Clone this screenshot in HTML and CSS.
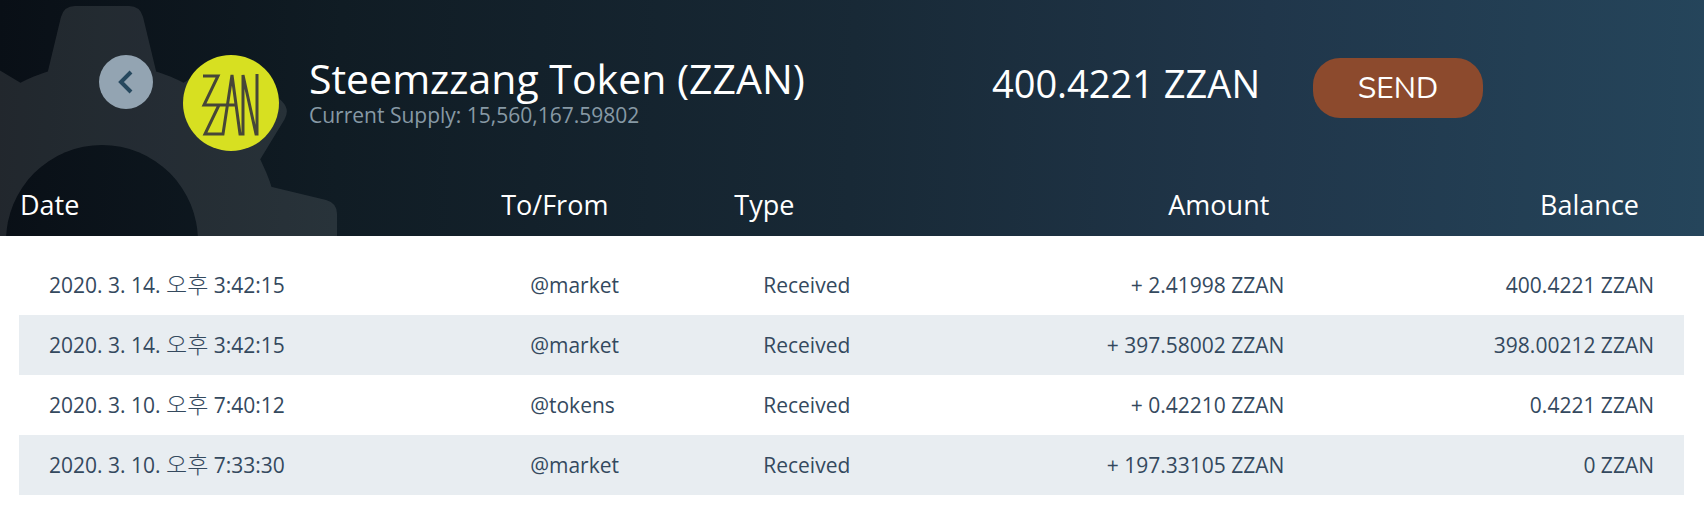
FILE: index.html
```html
<!DOCTYPE html>
<html lang="ko">
<head>
<meta charset="utf-8">
<title>Steemzzang Token (ZZAN)</title>
<link rel="stylesheet" href="styles.css">
</head>
<body>
<main class="wallet">
  <svg class="gear" viewBox="0 0 340 236" aria-hidden="true">
    <defs>
      <path id="tooth" d="M-54-170-41-224Q-38-235-27-235H27Q38-235 41-224L54-170 0 0Z"/>
      <path id="tooth-short" d="M-54-170-43-215Q-40-226-29-226H29Q40-226 43-215L54-170 0 0Z"/>
      <mask id="hub">
        <g transform="translate(102 241)">
          <circle r="178" fill="#fff"/>
          <use href="#tooth" fill="#fff"/>
          <use href="#tooth-short" fill="#fff" transform="rotate(45)"/>
          <use href="#tooth" fill="#fff" transform="rotate(90)"/>
          <use href="#tooth-short" fill="#fff" transform="rotate(-45)"/>
          <circle r="96" fill="#000"/>
        </g>
      </mask>
    </defs>
    <rect class="gear-fill" width="340" height="236" mask="url(#hub)"/>
  </svg>

  <header class="token">
    <button class="back" type="button" aria-label="Back">
      <svg class="back-icon" viewBox="0 0 54 54" aria-hidden="true"><path d="M32 17 22 27 32 37"/></svg>
    </button>
    <svg class="logo" viewBox="0 0 96 96" role="img" aria-label="ZZAN">
      <circle class="logo-disc" cx="48" cy="48" r="48"/>
      <path class="logo-mark" d="M20 21H35L21 50H54M36 50 22 79H40L49 20 57 79H60V20L73 79H74V19"/>
    </svg>
    <div class="title">
      <h1 class="name">Steemzzang Token (ZZAN)</h1>
      <p class="supply">Current Supply: 15,560,167.59802</p>
    </div>
    <p class="holding">400.4221 ZZAN</p>
    <button class="send" type="button">SEND</button>
  </header>

  <table class="history">
    <colgroup><col class="c-date"><col class="c-who"><col class="c-type"><col class="c-amount"><col class="c-balance"></colgroup>
    <thead>
      <tr><th>Date</th><th>To/From</th><th>Type</th><th class="num">Amount</th><th class="num">Balance</th></tr>
    </thead>
    <tbody>
      <tr><td>2020. 3. 14. <span class="meridiem">오후</span> 3:42:15</td><td>@market</td><td>Received</td><td class="num">+ 2.41998 ZZAN</td><td class="num">400.4221 ZZAN</td></tr>
      <tr><td>2020. 3. 14. <span class="meridiem">오후</span> 3:42:15</td><td>@market</td><td>Received</td><td class="num">+ 397.58002 ZZAN</td><td class="num">398.00212 ZZAN</td></tr>
      <tr><td>2020. 3. 10. <span class="meridiem">오후</span> 7:40:12</td><td>@tokens</td><td>Received</td><td class="num">+ 0.42210 ZZAN</td><td class="num">0.4221 ZZAN</td></tr>
      <tr><td>2020. 3. 10. <span class="meridiem">오후</span> 7:33:30</td><td>@market</td><td>Received</td><td class="num">+ 197.33105 ZZAN</td><td class="num">0 ZZAN</td></tr>
    </tbody>
  </table>
</main>
</body>
</html>
```
FILE: styles.css
```css
* { box-sizing: border-box; }

body {
  margin: 0;
  background: #fff;
  color: #34495e;
  font-family: "Open Sans", "Noto Sans CJK KR", sans-serif;
}

h1, p { margin: 0; font-weight: 400; }

.wallet {
  position: relative;
  padding: 0 20px 11px 19px;
  background: linear-gradient(92deg, #090f16 0%, #101c24 20%, #182936 50%, #20364a 74%, #25455b 100%) 0 0 / 100% 236px no-repeat;
}

.gear {
  position: absolute;
  top: 0;
  left: 0;
  width: 340px;
  height: 236px;
}

.gear-fill { fill: #fff; fill-opacity: .1; }

.token {
  position: relative;
  display: flex;
  align-items: flex-start;
  height: 175px;
  padding: 55px 201px 0 80px;
}

.back {
  width: 54px;
  height: 54px;
  padding: 0;
  border: 0;
  border-radius: 50%;
  background: #93a4b2;
}

.back-icon { display: block; fill: none; stroke: #26485e; stroke-width: 4; }

.logo { width: 96px; height: 96px; margin-left: 30px; }
.logo-disc { fill: #d7e021; }
.logo-mark { fill: none; stroke: #464638; stroke-width: 3; }

.title { margin-left: 30px; }
.name { font-size: 41px; line-height: 46px; white-space: nowrap; }
.name, .holding, .send, .history th { color: #fff; }
.supply { color: #8799a5; font-size: 21px; line-height: 28px; }

.holding { margin-left: auto; font-size: 38px; line-height: 56px; white-space: nowrap; }

.send {
  width: 170px;
  height: 60px;
  margin: 3px 0 0 53px;
  padding: 0;
  border: 0;
  border-radius: 27px;
  background: #8c4a2d;
  font: 30px Nunito, Lato, sans-serif;
}

.history {
  position: relative;
  width: 100%;
  table-layout: fixed;
  border-collapse: collapse;
}

.c-date { width: 28.9%; }
.c-who { width: 14%; }
.c-type { width: 14%; }
.c-amount { width: 20.9%; }
.c-balance { width: 22.2%; }

.history th {
  height: 80px;
  padding: 12px 45px 0 1px;
  font-size: 27px;
  font-weight: 400;
  line-height: 36px;
  text-align: left;
  vertical-align: top;
}

.history td {
  height: 60px;
  padding: 0 30px;
  font-size: 21px;
  line-height: 28px;
  white-space: nowrap;
}

.history .meridiem { font-size: 23px; font-weight: 300; line-height: 1; }
.history .num { text-align: right; }
.history tbody tr:nth-child(even) { background: #e8edf1; }
```
